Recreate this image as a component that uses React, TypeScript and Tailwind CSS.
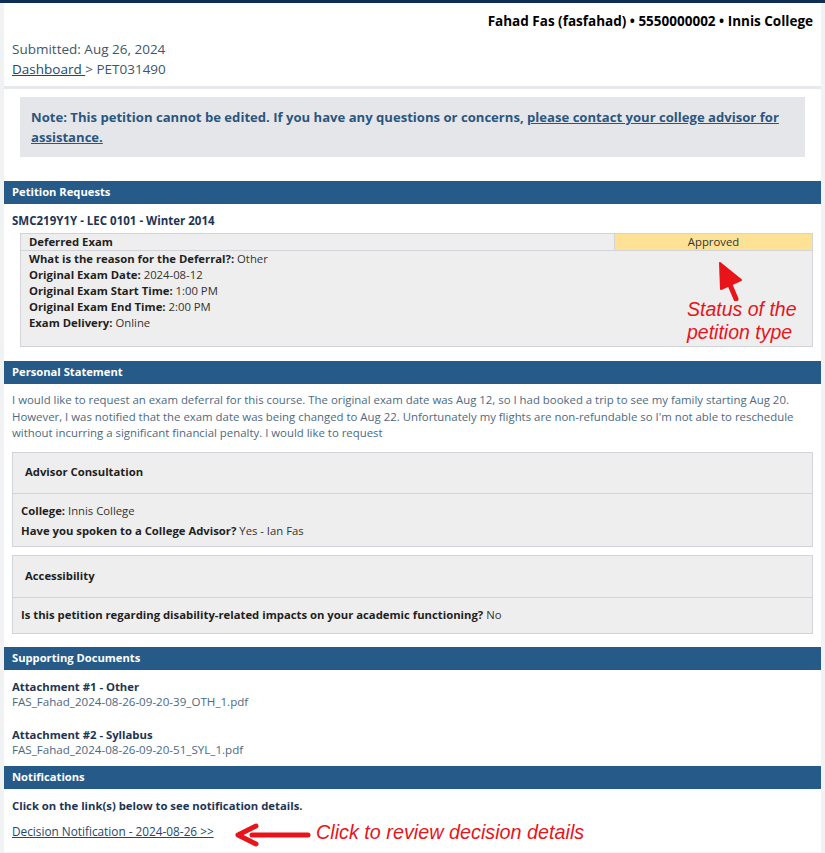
import React from "react";

const font = { fontFamily: '"Open Sans", "Liberation Sans", sans-serif' };
const annot = { fontFamily: '"Liberation Sans", Arial, sans-serif' };

function SectionBar({ title }: { title: string }) {
  return (
    <div className="flex h-[23px] items-center bg-[#265b89] px-2 text-[11.2px] font-bold text-white">
      {title}
    </div>
  );
}

function Field({ label, value }: { label: string; value: string }) {
  return (
    <div className="leading-[16px]">
      <span className="font-bold text-[#1f1f1f]">{label}</span>{" "}
      <span className="text-[#333]">{value}</span>
    </div>
  );
}

function UpArrow() {
  return (
    <svg width="30" height="42" viewBox="0 0 30 42" className="absolute left-[712px] top-[256px]">
      <path d="M24 40 L13 14" stroke="#e8141a" strokeWidth="5" strokeLinecap="round" fill="none" />
      <path d="M8 4 L9 30 L29 21 Z" fill="#e8141a" stroke="#e8141a" strokeWidth="2" strokeLinejoin="round" />
    </svg>
  );
}

function LeftArrow() {
  return (
    <svg width="80" height="26" viewBox="0 0 80 26" className="absolute left-[234px] top-[819px]">
      <path d="M18 13 L74 13" stroke="#e8141a" strokeWidth="5" strokeLinecap="round" />
      <path d="M4 13 L22 4 M4 13 L22 22" stroke="#e8141a" strokeWidth="5" strokeLinecap="round" fill="none" />
    </svg>
  );
}

export default function App() {
  return (
    <div style={font} className="relative min-h-[853px] border-t-[3px] border-[#0f2d55] bg-[#f1f2f4] px-[4px] text-[11.3px]">
      <div className="bg-white">
        {/* header */}
        <div className="px-2 pb-[7px] pt-[9px]">
          <div className="text-right text-[13.5px] font-bold leading-[18px] text-black">
            Fahad Fas (fasfahad) • 5550000002 • Innis College
          </div>
          <div className="mt-[9px] text-[13.5px] leading-[20px] text-[#40566b]">Submitted: Aug 26, 2024</div>
          <div className="text-[13.5px] leading-[20px] text-[#40566b]">
            <a href="#" className="text-[#23486e] underline">Dashboard </a>&gt; PET031490
          </div>
        </div>
        <div className="h-[3px] bg-[#e7e8ec]" />
        <div className="px-4 pb-[24px] pt-[8px]">
          <div className="bg-[#e5e6ea] px-[11px] py-[10px] text-[13.1px] font-bold leading-[20px] text-[#2a5680]">
            Note: This petition cannot be edited. If you have any questions or concerns,{" "}
            <a href="#" className="underline">please contact your college advisor for assistance.</a>
          </div>
        </div>

        <SectionBar title="Petition Requests" />
        <div className="px-2 pb-[14px] pt-[9px]">
          <div className="text-[11.5px] font-bold leading-[16px] text-[#1d3554]">SMC219Y1Y - LEC 0101 - Winter 2014</div>
          <div className="ml-2 mt-[4px] border border-[#d3d4da] bg-[#eeeeee]">
            <div className="flex h-[17px] border-b border-[#d3d4da]">
              <div className="flex-1 px-2 font-bold leading-[16px] text-[#1f1f1f]">Deferred Exam</div>
              <div className="w-[198px] border-l border-[#d3d4da] bg-[#fde295] text-center leading-[16px] text-[#333]">Approved</div>
            </div>
            <div className="h-[95px] px-2">
              <Field label="What is the reason for the Deferral?:" value="Other" />
              <Field label="Original Exam Date:" value="2024-08-12" />
              <Field label="Original Exam Start Time:" value="1:00 PM" />
              <Field label="Original Exam End Time:" value="2:00 PM" />
              <Field label="Exam Delivery:" value="Online" />
            </div>
          </div>
        </div>

        <SectionBar title="Personal Statement" />
        <div className="px-2 pb-[13px] pt-[8px]">
          <p className="text-[11.4px] leading-[16.5px] text-[#4d6982]">
            I would like to request an exam deferral for this course. The original exam date was Aug 12, so I had booked a trip to see my family starting Aug 20. However, I was notified that the exam date was being changed to Aug 22. Unfortunately my flights are non-refundable so I'm not able to reschedule without incurring a significant financial penalty. I would like to request
          </p>
          <div className="mt-[10px] border border-[#d3d4da] bg-[#eeeeee]">
            <div className="flex h-[41px] items-center border-b border-[#d3d4da] px-3 font-bold text-[#1f1f1f]">Advisor Consultation</div>
            <div className="h-[52px] px-2 pt-[7px]">
              <div className="leading-[20px]"><span className="font-bold text-[#1f1f1f]">College:</span> <span className="text-[#333]">Innis College</span></div>
              <div className="leading-[20px]"><span className="font-bold text-[#1f1f1f]">Have you spoken to a College Advisor?</span> <span className="text-[#333]">Yes - Ian Fas</span></div>
            </div>
          </div>
          <div className="mt-[8px] border border-[#d3d4da] bg-[#eeeeee]">
            <div className="flex h-[42px] items-center border-b border-[#d3d4da] px-3 font-bold text-[#1f1f1f]">Accessibility</div>
            <div className="flex h-[35px] items-center px-2">
              <span className="font-bold text-[#1f1f1f]">Is this petition regarding disability-related impacts on your academic functioning?</span>&nbsp;<span className="text-[#333]">No</span>
            </div>
          </div>
        </div>

        <SectionBar title="Supporting Documents" />
        <div className="px-2 pb-[9px] pt-[9px]">
          <div className="font-bold leading-[15px] text-[#1d3554]">Attachment #1 - Other</div>
          <div className="text-[11.6px] leading-[15px] text-[#4d6982]">FAS_Fahad_2024-08-26-09-20-39_OTH_1.pdf</div>
          <div className="mt-[18px] font-bold leading-[15px] text-[#1d3554]">Attachment #2 - Syllabus</div>
          <div className="text-[11.6px] leading-[15px] text-[#4d6982]">FAS_Fahad_2024-08-26-09-20-51_SYL_1.pdf</div>
        </div>

        <SectionBar title="Notifications" />
        <div className="px-2 pb-[12px] pt-[9px]">
          <div className="font-bold leading-[16px] text-[#1d3554]">Click on the link(s) below to see notification details.</div>
          <a href="#" className="mt-[9px] inline-block text-[11.8px] leading-[16px] text-[#23486e] underline">Decision Notification - 2024-08-26 &gt;&gt;</a>
        </div>
      </div>

      <UpArrow />
      <div className="absolute left-[687px] top-[295px] text-[19.5px] italic leading-[23px] text-[#e8141a]" style={annot}>
        Status of the<br />petition type
      </div>
      <LeftArrow />
      <div className="absolute left-[316px] top-[818px] text-[19.8px] italic leading-[23px] text-[#e8141a]" style={annot}>
        Click to review decision details
      </div>
    </div>
  );
}
